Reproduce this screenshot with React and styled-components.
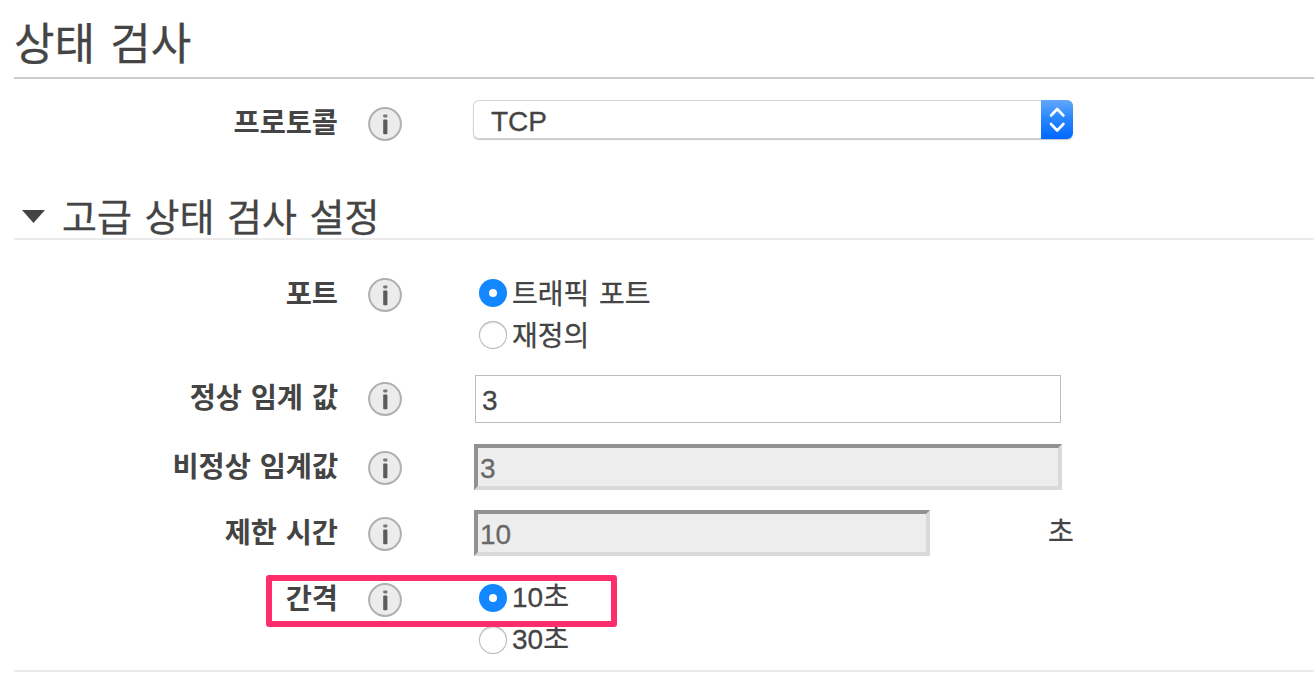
import React from 'react';
import styled, { createGlobalStyle, css } from 'styled-components';

const GlobalStyle = createGlobalStyle`
  *, *::before, *::after { box-sizing: border-box; }
  body {
    margin: 0;
    background: #fff;
    color: #444;
    font-family: "Liberation Sans", "Noto Sans CJK KR", sans-serif;
    font-size: 28px;
    -webkit-text-stroke: 0.3px currentColor;
    overflow: hidden;
  }
`;

const Panel = styled.form`
  display: flex;
  flex-direction: column;
  width: 1314px;
  height: 674px;
  padding-left: 14px;
  overflow: hidden;
`;

const Title = styled.h1`
  margin: 0;
  height: 79px;
  padding-top: 15px;
  border-bottom: 2px solid #ccc;
  font-size: 44px;
  font-weight: 400;
  line-height: 60px;
  word-spacing: 3px;
`;

const SectionTitle = styled.h2`
  display: flex;
  align-items: center;
  margin: 0;
  height: 50px;
  padding: 8px 0 0 8px;
  border-bottom: 2px solid #ebebeb;
  font-size: 38px;
  font-weight: 400;
  line-height: 48px;
  word-spacing: 2px;
  gap: 17px;
`;

const Arrow = styled.svg`
  margin-bottom: 3px;
`;

const Section = styled.section`
  display: flex;
  flex-direction: column;
  height: ${(p) => p.$height}px;
  padding-top: ${(p) => p.$top}px;
`;

const Settings = styled(Section)`
  border-bottom: 2px solid #ebebeb;
`;

const Row = styled.div`
  display: grid;
  grid-template-columns: 324px 34px 1fr;
  column-gap: 30px;
  flex: none;
  position: relative;
  height: ${(p) => p.$height}px;
`;

const Label = styled.label`
  margin-top: ${(p) => p.$top}px;
  height: 34px;
  text-align: right;
  font-weight: 700;
  line-height: 34px;
  white-space: nowrap;
  font-size: 28.4px;
  word-spacing: 1px;
  -webkit-text-stroke: 0;
`;

const InfoSlot = styled.span`
  display: flex;
  height: 34px;
  margin-top: ${(p) => p.$top}px;
`;

const Field = styled.div`
  display: flex;
  align-items: flex-start;
  padding-left: ${(p) => p.$inset}px;
`;

const Select = styled.div`
  display: flex;
  justify-content: space-between;
  width: 600px;
  height: 39px;
  border-radius: 6px;
  background: #fff;
  box-shadow: inset 0 0 0 1px #d4d4d4, 0 1px 1px #c4c4c4;
  line-height: 43px;
  padding-left: 18px;
`;

const Stepper = styled.span`
  display: flex;
  width: 32px;
  height: 39px;
  border-radius: 0 6px 6px 0;
  background: linear-gradient(#62a8fc, #2584ff 50%, #0068fe);
`;

const sunken = css`
  height: 46px;
  border: 4px solid;
  border-color: #919191 #dadada #dadada #919191;
  background: #ededed;
  color: #686868;
  padding: 3px 2px 0;
`;

const plain = css`
  height: 48px;
  border: 1px solid #bdbdbd;
  background: #fff;
  color: #444;
  padding: 4px 6px 0;
`;

const Input = styled.input`
  width: ${(p) => p.$width}px;
  border-radius: 0;
  outline: none;
  font: inherit;
  ${(p) => (p.disabled ? sunken : plain)}
`;

const Unit = styled.span`
  margin-left: 118px;
  line-height: 46px;
`;

const Options = styled.div`
  display: flex;
  flex-direction: column;
  gap: 14px;
  padding-top: ${(p) => p.$top}px;
`;

const Option = styled.label`
  display: flex;
  align-items: center;
  gap: 5px;
  height: 28px;
  line-height: 28px;
  white-space: nowrap;
  word-spacing: 2px;
`;

const OptionText = styled.span`
  padding-top: ${(p) => p.$drop}px;
`;

const Radio = styled.span`
  display: flex;
  align-items: center;
  justify-content: center;
  width: 28px;
  height: 28px;
  border-radius: 50%;
  background: ${(p) => (p.$checked ? '#1287ff' : '#fff')};
  box-shadow: ${(p) => (p.$checked ? 'none' : 'inset 0 0 0 1px #b8b8b8, inset 0 2px 2px #ddd')};
  &::after {
    content: '';
    width: 8px;
    height: 8px;
    border-radius: 50%;
    background: #fff;
  }
`;

const Highlight = styled.div`
  position: absolute;
  left: 252px;
  top: -8px;
  width: 351px;
  height: 52px;
  border: 6px solid #ff2d6b;
  border-radius: 3px;
  pointer-events: none;
`;

const InfoIcon = ({ top }) => (
  <InfoSlot $top={top}>
    <svg width="34" height="34" viewBox="0 0 34 34">
      <circle cx="17" cy="17" r="15.9" fill="#ececec" stroke="#b0b0b0" strokeWidth="2" />
      <rect x="15.2" y="7.6" width="4.2" height="2.8" rx="0.8" fill="#777" />
      <rect x="15.2" y="12.6" width="4.2" height="14.6" rx="0.8" fill="#5c5c5c" />
    </svg>
  </InfoSlot>
);

const FormRow = ({ label, height, iconTop = 0, inset = 41, highlighted, children }) => (
  <Row $height={height}>
    <Label $top={iconTop - 1}>{label}</Label>
    <InfoIcon top={iconTop} />
    <Field $inset={inset}>{children}</Field>
    {highlighted && <Highlight />}
  </Row>
);

const RadioGroup = ({ options, drop = 0 }) => (
  <Options $top={1}>
    {options.map((text, i) => (
      <Option key={text}>
        <Radio $checked={i === 0} />
        <OptionText $drop={drop}>{text}</OptionText>
      </Option>
    ))}
  </Options>
);

export default function App() {
  return (
    <>
      <GlobalStyle />
      <Panel>
        <Title>상태 검사</Title>
        <Section $top={21} $height={111}>
          <FormRow label="프로토콜" height={39} iconTop={7}>
            <Select>
              TCP
              <Stepper>
                <svg width="32" height="39" viewBox="0 0 32 39" fill="none" stroke="#fff" strokeWidth="2.6" strokeLinecap="round" strokeLinejoin="round">
                  <path d="M10 15.5 L16.2 9 L22.4 15.5 M10 24 L16.2 30.5 L22.4 24" />
                </svg>
              </Stepper>
            </Select>
          </FormRow>
        </Section>
        <SectionTitle>
          <Arrow width="23" height="13" viewBox="0 0 23 13">
            <path d="M0 0H23L11.5 13Z" fill="#444" />
          </Arrow>
          고급 상태 검사 설정
        </SectionTitle>
        <Settings $top={38} $height={432}>
          <FormRow label="포트" height={97} inset={47}>
            <RadioGroup options={['트래픽 포트', '재정의']} drop={3} />
          </FormRow>
          <FormRow label="정상 임계 값" height={69} iconTop={7} inset={43}>
            <Input $width={586} defaultValue="3" />
          </FormRow>
          <FormRow label="비정상 임계값" height={66} iconTop={7} inset={42}>
            <Input $width={588} defaultValue="3" disabled />
          </FormRow>
          <FormRow label="제한 시간" height={73} iconTop={7} inset={42}>
            <Input $width={456} defaultValue="10" disabled />
            <Unit>초</Unit>
          </FormRow>
          <FormRow label="간격" height={70} inset={47} highlighted>
            <RadioGroup options={['10초', '30초']} />
          </FormRow>
        </Settings>
      </Panel>
    </>
  );
}
